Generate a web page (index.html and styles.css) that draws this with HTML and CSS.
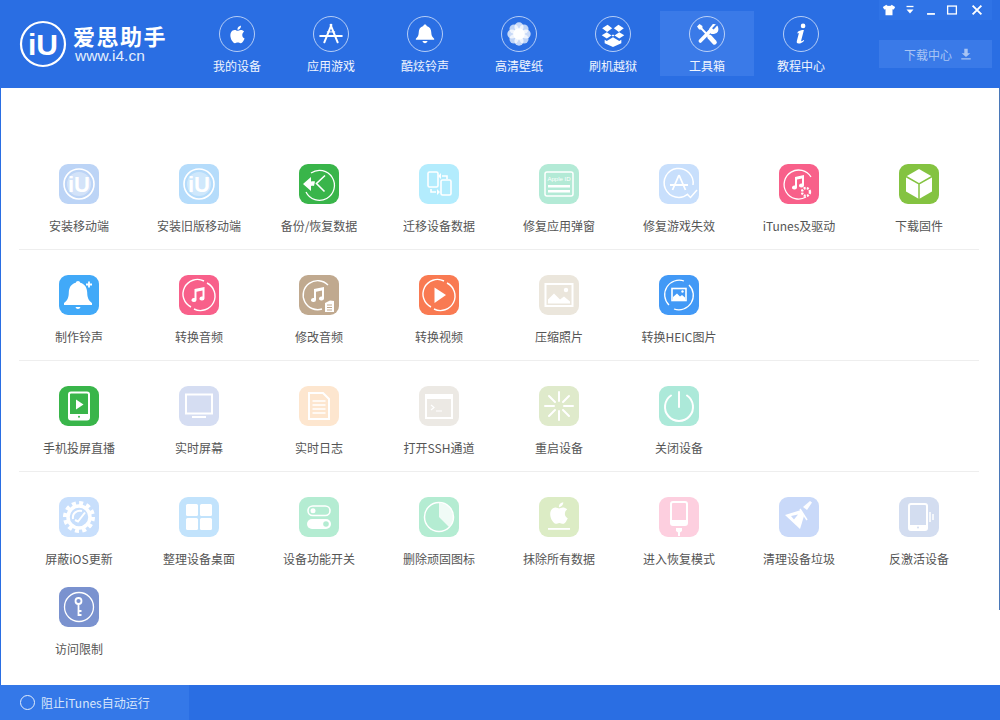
FILE: index.html
```html
<!DOCTYPE html>
<html lang="zh-CN">
<head>
<meta charset="utf-8">
<title>爱思助手</title>
<link rel="stylesheet" href="styles.css">
</head>
<body>
<svg class="defs" width="0" height="0" aria-hidden="true">
<defs>
<symbol id="apple" viewBox="0 0 24 24"><path fill="#fff" d="M18.71 19.5c-.83 1.24-1.71 2.45-3.05 2.47-1.34.03-1.77-.79-3.29-.79-1.53 0-2 .77-3.27.82-1.31.05-2.3-1.32-3.14-2.53C4.25 17 2.94 12.45 4.7 9.39c.87-1.52 2.43-2.48 4.12-2.51 1.28-.02 2.5.87 3.29.87.78 0 2.26-1.07 3.81-.91.65.03 2.47.26 3.64 1.98-.09.06-2.17 1.28-2.15 3.81.03 3.02 2.65 4.03 2.68 4.04-.03.07-.42 1.44-1.38 2.83M13 3.5c.73-.83 1.94-1.46 2.94-1.5.13 1.17-.34 2.35-1.04 3.19-.69.85-1.83 1.51-2.95 1.42-.15-1.15.41-2.35 1.05-3.11z"/></symbol>
<symbol id="n-app" viewBox="0 0 36 36"><g fill="none" stroke="#fff" stroke-linecap="round"><path stroke-width="2.400" d="M18.500 7 10 28M17.500 7 26 28"/><path stroke-width="2.400" d="M5 20.500h26"/><path stroke-width="1.200" d="M13.500 15.500h9"/></g></symbol>
<symbol id="n-bell" viewBox="0 0 36 36"><path fill="#fff" d="M18 6.500c1.200 0 2 .8 2 1.800 3.800 1 5.400 4 5.500 7.700.1 3.400 1 5.700 3.500 7.700v1.300H7v-1.300c2.500-2 3.400-4.300 3.500-7.700.1-3.700 1.700-6.700 5.500-7.700 0-1 .8-1.800 2-1.800zM15 26.500h6c-.3 1.600-1.500 2.500-3 2.500s-2.700-.9-3-2.500z"/></symbol>
<symbol id="n-flower" viewBox="0 0 36 36"><g fill="#fff"><circle cx="18" cy="9.500" r="5.500" opacity=".75"/><circle cx="18" cy="26.500" r="5.500" opacity=".75"/><circle cx="9.500" cy="18" r="5.500" opacity=".75"/><circle cx="26.500" cy="18" r="5.500" opacity=".75"/><circle cx="12" cy="12" r="5.500" opacity=".7"/><circle cx="24" cy="12" r="5.500" opacity=".7"/><circle cx="12" cy="24" r="5.500" opacity=".7"/><circle cx="24" cy="24" r="5.500" opacity=".7"/><circle cx="18" cy="18" r="7"/></g></symbol>
<symbol id="n-box" viewBox="0 0 36 36"><g fill="#fff"><path d="M11.500 7 17 11 11 15.500 5 11zM24.500 7 31 11l-6 4.500L19 11zM4.500 19.500l6-3.500L18 21l7.500-5 6 3.500-6 4-7.500-5-7.500 5z"/><path d="M8 25l2.500 1.500 7.500-4.500 7.500 4.500L28 25v4l-10 4.500L8 29z"/></g></symbol>
<symbol id="n-tools" viewBox="0 0 36 36"><g fill="none" stroke="#fff" stroke-linecap="round"><path stroke-width="2.400" d="M10 10l9 9.500"/><path stroke-width="5.500" d="M21 21.500l6 6.500"/><path stroke-width="4.200" d="M24 12 10 26.500"/></g><path fill="#fff" d="M6 9l3-3 3.500 2.500v3l-1 1h-3zM25 6a6 6 0 1 1-5 8l1-3z"/><path fill="#3a7ae8" d="M24 11l5-5 2 1-5 5.500z"/></symbol>
<symbol id="n-info" viewBox="0 0 36 36"><path fill="#fff" d="M20.500 5.500a2.800 2.800 0 1 1 0 5.600 2.800 2.800 0 0 1 0-5.600zM14 15.500c2-1.500 4.500-2.300 7.500-2.300l-3.300 12.500c-.2 1 .6 1.200 1.300.7l1.700-1.200.6.900c-2 2.200-4.200 3.400-6.600 3.400-2 0-2.700-1-2.200-3l2.500-9.700-1.800.6z"/></symbol>

<symbol id="i-iu" viewBox="0 0 40 40"><circle cx="20" cy="20" r="15" fill="none" stroke="#fff" stroke-width="1.600"/><circle cx="20" cy="20" r="12" fill="#fff" fill-opacity=".35"/><text x="20" y="28" text-anchor="middle" class="svg-logo">iU</text></symbol>
<symbol id="i-backup" viewBox="0 0 40 40"><g fill="none" stroke="#fff" stroke-width="1.300"><path d="M12 9a15 15 0 1 1-5 19"/><path stroke-width="1.600" d="M26 11.500l-8.500 8 8 8"/></g><path fill="#fff" d="M4 20l8-7v4.500c1.500-.5 3-.5 4 0l-1 4.500c-1-.5-2-.5-3 0V27z"/></symbol>
<symbol id="i-migrate" viewBox="0 0 40 40"><g fill="none" stroke="#fff" stroke-width="1.600"><rect x="9" y="8" width="10" height="15" rx="1.500"/><rect x="22" y="16" width="10" height="15" rx="1.500"/><path d="M23 12h5v3M17 28h-5v-3"/></g><path fill="#fff" d="M22 9v6l-3-3zM18 25v6l3-3z"/></symbol>
<symbol id="i-appleid" viewBox="0 0 40 40"><rect x="6" y="8" width="28" height="24" rx="2" fill="none" stroke="#fff" stroke-width="1.500"/><text x="20" y="17" text-anchor="middle" class="svg-tiny">Apple ID</text><rect x="9" y="21" width="22" height="2.500" fill="#fff"/><rect x="9" y="26" width="22" height="2.500" fill="#fff"/></symbol>
<symbol id="i-appfix" viewBox="0 0 40 40"><g fill="none" stroke="#fff" stroke-width="1.500"><path d="M29 30a14.500 14.500 0 1 1 5-9"/><path d="M28 30l3.500 3.500L38 26"/><path stroke-width="1.800" d="M20 11l-6.500 15M20 11l6.500 15M11 21h18"/></g></symbol>
<symbol id="i-itunes" viewBox="0 0 40 40"><g fill="none" stroke="#fff" stroke-width="1.300"><path d="M32 13a14.500 14.500 0 1 0-5 20"/><circle cx="27" cy="28" r="4" stroke-width="2.400" stroke-dasharray="2 1.200"/></g><path fill="#fff" d="M16 13l9-2v10.500a2.500 2 0 1 1-2-2V14.500l-5 1.100v8a2.500 2 0 1 1-2-2z"/></symbol>
<symbol id="i-cube" viewBox="0 0 40 40"><path fill="#fff" d="M20 5 33 12.500v15L20 35 7 27.500v-15z"/><path fill="none" stroke="#84c341" stroke-width="1.500" d="M7 12.500 20 20l13-7.500M20 20v15"/></symbol>
<symbol id="i-bell" viewBox="0 0 40 40"><path fill="#fff" d="M19 6c1.200 0 2 .7 2.200 1.800 5 1.300 6.800 5 7 9.700.1 5 1.300 8 4.800 10.500v2H5v-2c3.500-2.500 4.700-5.500 4.800-10.500.2-4.700 2-8.400 7-9.700C17 6.700 17.800 6 19 6zM16.500 32h5c-.3 1.300-1.300 2-2.500 2s-2.200-.7-2.500-2z"/><path fill="none" stroke="#fff" stroke-width="1.800" d="M30 6.500v6M27 9.500h6"/></symbol>
<symbol id="i-music" viewBox="0 0 40 40"><g fill="none" stroke="#fff" stroke-width="1.400"><path d="M25 6a14.500 14.500 0 0 0-13 26"/><path d="M15 34a14.500 14.500 0 0 0 13-26"/></g><path fill="#fff" d="M15.500 14l10-2v11.500a2.500 2 0 1 1-2-2V15.500l-6 1.200V25a2.500 2 0 1 1-2-2z"/></symbol>
<symbol id="i-musicedit" viewBox="0 0 40 40"><g fill="none" stroke="#fff" stroke-width="1.400"><path d="M29 10a14.500 14.500 0 1 0-6 24"/></g><path fill="#fff" d="M15 14l10-2v11.500a2.500 2 0 1 1-2-2V15.500l-6 1.200V25a2.500 2 0 1 1-2-2zM26 28l5-2.500 4 .5v11h-9z"/><path stroke="#c0a98f" fill="none" d="M28 30h5M28 32.500h5M28 35h5"/></symbol>
<symbol id="i-video" viewBox="0 0 40 40"><g fill="none" stroke="#fff" stroke-width="1.400"><path d="M25 6a14.500 14.500 0 0 0-13 26"/><path d="M15 34a14.500 14.500 0 0 0 13-26"/></g><path fill="#fff" d="M15.500 12.500 27 20l-11.500 8z"/></symbol>
<symbol id="i-photo" viewBox="0 0 40 40"><rect x="6.500" y="9" width="27" height="22" fill="none" stroke="#fff" stroke-width="2"/><path fill="#fff" d="M9 28.500v-4l6-6 6 6 4-3 6 5v2z"/><circle cx="27" cy="15" r="2.200" fill="#fff"/></symbol>
<symbol id="i-heic" viewBox="0 0 40 40"><g fill="none" stroke="#fff" stroke-width="1.300"><path d="M25 6a14.500 14.500 0 0 0-15 24"/><path d="M15 34a14.500 14.500 0 0 0 15-24"/><rect x="13" y="13.500" width="14" height="12" stroke-width="1.600"/></g><path fill="#fff" d="M14 25v-3l4-3.500 3 3 2-1.500 3 2.500V25z"/><circle cx="23.500" cy="16.500" r="1.200" fill="#fff"/></symbol>
<symbol id="i-cast" viewBox="0 0 40 40"><rect x="10" y="6.500" width="20" height="27" rx="2" fill="none" stroke="#fff" stroke-width="2"/><rect x="10" y="28" width="20" height="5.500" fill="#fff"/><circle cx="20" cy="30.800" r="1" fill="#39b54a"/><path fill="#fff" d="M17 13.500 24.500 18.500 17 23.500z"/></symbol>
<symbol id="i-screen" viewBox="0 0 40 40"><rect x="7" y="8.500" width="26" height="19" fill="none" stroke="#fff" stroke-width="2"/><path fill="#fff" d="M13 30h14v2H13z"/></symbol>
<symbol id="i-log" viewBox="0 0 40 40"><path fill="none" stroke="#fff" stroke-width="2" d="M10 7h14l6 6v20H10z"/><path fill="none" stroke="#fff" stroke-width="1.500" d="M13.500 15h13M13.500 19h13M13.500 23h13M13.500 27h13"/></symbol>
<symbol id="i-ssh" viewBox="0 0 40 40"><path fill="#fff" d="M6 8h28v5H6z"/><rect x="7" y="9" width="26" height="23" fill="none" stroke="#fff" stroke-width="2"/><path fill="none" stroke="#fff" stroke-width="1.200" d="M12 19l3 2.500-3 2.500M17 25h6"/></symbol>
<symbol id="i-restart" viewBox="0 0 40 40"><g stroke="#fff" stroke-width="2" stroke-linecap="round"><path d="M20 6v9M20 25v9M6 20h9M25 20h9M10 10l6 6M24 24l6 6M30 10l-6 6M16 24l-6 6"/></g></symbol>
<symbol id="i-power" viewBox="0 0 40 40"><g fill="none" stroke="#fff" stroke-width="2" stroke-linecap="round"><path d="M12 9.500a14 14 0 1 0 16 0"/><path d="M20 6v15"/></g></symbol>
<symbol id="i-gear" viewBox="0 0 40 40"><circle cx="20" cy="20" r="11" fill="none" stroke="#fff" stroke-width="3.500"/><circle cx="20" cy="20" r="14" fill="none" stroke="#fff" stroke-width="4" stroke-dasharray="4 3.300"/><path fill="none" stroke="#fff" stroke-width="2" d="M16 23l3 1.500 7-9M14 22c-1-6 4-9 9-8"/></symbol>
<symbol id="i-grid" viewBox="0 0 40 40"><g fill="#fff"><rect x="7" y="7" width="12" height="12" rx="1.500"/><rect x="21" y="7" width="12" height="12" rx="1.500"/><rect x="7" y="21" width="12" height="12" rx="1.500"/><rect x="21" y="21" width="12" height="12" rx="1.500"/></g></symbol>
<symbol id="i-toggle" viewBox="0 0 40 40"><rect x="9" y="9" width="22" height="9.500" rx="4.750" fill="none" stroke="#fff" stroke-width="1.600"/><circle cx="14" cy="13.700" r="2.500" fill="#fff"/><rect x="8" y="22" width="24" height="10" rx="5" fill="#fff"/><circle cx="27" cy="27" r="2.800" fill="#b4ecd2"/></symbol>
<symbol id="i-pie" viewBox="0 0 40 40"><circle cx="20" cy="20" r="14.500" fill="none" stroke="#fff" stroke-width="1.500"/><path fill="#fff" fill-opacity=".8" d="M20 6a14 14 0 0 1 10 24L20 20z"/></symbol>
<symbol id="i-wipe" viewBox="0 0 40 40"><use href="#apple" x="7" y="3" width="26" height="26"/><rect x="9" y="31" width="22" height="1.800" fill="#fff"/></symbol>
<symbol id="i-recovery" viewBox="0 0 40 40"><rect x="12" y="5" width="16" height="23" rx="2" fill="none" stroke="#fff" stroke-width="2"/><path fill="#fff" d="M12 23h16v5H12z"/><path fill="#fff" d="M17 31h6v3l-2 1.500V39h-2v-3.500L17 34z"/></symbol>
<symbol id="i-broom" viewBox="0 0 40 40"><path fill="#fff" d="M6 18 22 13l3 6-4 13z"/><path fill="#fdfdff" d="M24 10l7-6 2 1.500-5 7.500z"/><path fill="none" stroke="#fff" stroke-width="1.500" d="M21 12l7 11"/><path fill="#c9d9f9" d="M12 19l7-1.500-4 5z"/></symbol>
<symbol id="i-vibrate" viewBox="0 0 40 40"><rect x="10" y="7" width="18" height="26" rx="2" fill="none" stroke="#fff" stroke-width="2"/><path fill="#fff" d="M10 28h18v5H10z"/><circle cx="19" cy="30.500" r="1" fill="#d3ddf0"/><path fill="none" stroke="#fff" stroke-width="1.500" d="M31 15v10M34 17v6"/></symbol>
<symbol id="i-key" viewBox="0 0 40 40"><circle cx="20" cy="20" r="14.500" fill="none" stroke="#fff" stroke-width="1.300"/><circle cx="19.500" cy="14" r="3" fill="none" stroke="#fff" stroke-width="1.800"/><path fill="none" stroke="#fff" stroke-width="1.800" d="M19.500 17v12M19.500 24h3M19.500 28h3"/></symbol>
</defs>
</svg>

<header class="topbar">
  <div class="brand">
    <svg class="brand-mark" viewBox="0 0 48 48" width="48" height="48"><circle cx="24" cy="24" r="22" fill="#2a6ee3" stroke="#fff" stroke-width="2.200"/><text x="24" y="35" text-anchor="middle" class="svg-brand">iU</text></svg>
    <div class="brand-text">
      <div class="brand-name">爱思助手</div>
      <div class="brand-url">www.i4.cn</div>
    </div>
  </div>
  <nav class="nav">
    <div class="nav-item"><span class="nav-circle"><svg class="ni-apple"><use href="#apple"/></svg></span><span class="nav-label">我的设备</span></div>
    <div class="nav-item"><span class="nav-circle"><svg class="ni"><use href="#n-app"/></svg></span><span class="nav-label">应用游戏</span></div>
    <div class="nav-item"><span class="nav-circle"><svg class="ni"><use href="#n-bell"/></svg></span><span class="nav-label">酷炫铃声</span></div>
    <div class="nav-item"><span class="nav-circle"><svg class="ni"><use href="#n-flower"/></svg></span><span class="nav-label">高清壁纸</span></div>
    <div class="nav-item"><span class="nav-circle"><svg class="ni"><use href="#n-box"/></svg></span><span class="nav-label">刷机越狱</span></div>
    <div class="nav-item active"><span class="nav-circle"><svg class="ni"><use href="#n-tools"/></svg></span><span class="nav-label">工具箱</span></div>
    <div class="nav-item"><span class="nav-circle"><svg class="ni"><use href="#n-info"/></svg></span><span class="nav-label">教程中心</span></div>
  </nav>
  <div class="side">
    <div class="winctl">
      <svg class="wi" viewBox="0 0 16 16"><path fill="#fff" d="M5 2 1 4.500l1.500 3L4 7v7h8V7l1.500.5 1.500-3L11 2c-.5 1.800-5.500 1.800-6 0z"/></svg>
      <svg class="wi" viewBox="0 0 16 16"><path fill="none" stroke="#fff" stroke-width="1.500" d="M4 4h8"/><path fill="#fff" d="M4 7.500h8L8 12z"/></svg>
      <svg class="wi" viewBox="0 0 16 16"><path fill="none" stroke="#fff" stroke-width="2" d="M3.500 12.500h9"/></svg>
      <svg class="wi" viewBox="0 0 16 16"><rect x="3" y="3.500" width="10" height="9" fill="none" stroke="#fff" stroke-width="1.500"/></svg>
      <svg class="wi wi-close" viewBox="0 0 16 16"><path fill="none" stroke="#fff" stroke-width="2.200" d="M3 3l10 10M13 3 3 13"/></svg>
    </div>
    <div class="download">
      <span>下载中心</span>
      <svg class="dl-ico" viewBox="0 0 14 14"><path fill="#a9c5f4" d="M5 1h4v5h3L7 10.500 2 6h3zM1.500 12h11v1.500h-11z"/></svg>
    </div>
  </div>
</header>

<main class="tools">
  <section class="tool-row">
    <div class="tool"><svg class="ico c-a1"><use href="#i-iu"/></svg><span>安装移动端</span></div>
    <div class="tool"><svg class="ico c-a2"><use href="#i-iu"/></svg><span>安装旧版移动端</span></div>
    <div class="tool"><svg class="ico c-a3"><use href="#i-backup"/></svg><span>备份/恢复数据</span></div>
    <div class="tool"><svg class="ico c-a4"><use href="#i-migrate"/></svg><span>迁移设备数据</span></div>
    <div class="tool"><svg class="ico c-a5"><use href="#i-appleid"/></svg><span>修复应用弹窗</span></div>
    <div class="tool"><svg class="ico c-a6"><use href="#i-appfix"/></svg><span>修复游戏失效</span></div>
    <div class="tool"><svg class="ico c-a7"><use href="#i-itunes"/></svg><span>iTunes及驱动</span></div>
    <div class="tool"><svg class="ico c-a8"><use href="#i-cube"/></svg><span>下载固件</span></div>
  </section>
  <section class="tool-row">
    <div class="tool"><svg class="ico c-b1"><use href="#i-bell"/></svg><span>制作铃声</span></div>
    <div class="tool"><svg class="ico c-a7"><use href="#i-music"/></svg><span>转换音频</span></div>
    <div class="tool"><svg class="ico c-b3"><use href="#i-musicedit"/></svg><span>修改音频</span></div>
    <div class="tool"><svg class="ico c-b4"><use href="#i-video"/></svg><span>转换视频</span></div>
    <div class="tool"><svg class="ico c-b5"><use href="#i-photo"/></svg><span>压缩照片</span></div>
    <div class="tool"><svg class="ico c-b6"><use href="#i-heic"/></svg><span>转换HEIC图片</span></div>
  </section>
  <section class="tool-row">
    <div class="tool"><svg class="ico c-a3"><use href="#i-cast"/></svg><span>手机投屏直播</span></div>
    <div class="tool"><svg class="ico c-c2"><use href="#i-screen"/></svg><span>实时屏幕</span></div>
    <div class="tool"><svg class="ico c-c3"><use href="#i-log"/></svg><span>实时日志</span></div>
    <div class="tool"><svg class="ico c-c4"><use href="#i-ssh"/></svg><span>打开SSH通道</span></div>
    <div class="tool"><svg class="ico c-c5"><use href="#i-restart"/></svg><span>重启设备</span></div>
    <div class="tool"><svg class="ico c-c6"><use href="#i-power"/></svg><span>关闭设备</span></div>
  </section>
  <section class="tool-row last">
    <div class="tool"><svg class="ico c-a6"><use href="#i-gear"/></svg><span>屏蔽iOS更新</span></div>
    <div class="tool"><svg class="ico c-d2"><use href="#i-grid"/></svg><span>整理设备桌面</span></div>
    <div class="tool"><svg class="ico c-d3"><use href="#i-toggle"/></svg><span>设备功能开关</span></div>
    <div class="tool"><svg class="ico c-d3"><use href="#i-pie"/></svg><span>删除顽固图标</span></div>
    <div class="tool"><svg class="ico c-d5"><use href="#i-wipe"/></svg><span>抹除所有数据</span></div>
    <div class="tool"><svg class="ico c-d6"><use href="#i-recovery"/></svg><span>进入恢复模式</span></div>
    <div class="tool"><svg class="ico c-d7"><use href="#i-broom"/></svg><span>清理设备垃圾</span></div>
    <div class="tool"><svg class="ico c-d8"><use href="#i-vibrate"/></svg><span>反激活设备</span></div>
    <div class="tool"><svg class="ico c-d9"><use href="#i-key"/></svg><span>访问限制</span></div>
  </section>
</main>

<footer class="footer">
  <div class="itunes-block"><span class="ring"></span><span>阻止iTunes自动运行</span></div>
</footer>
</body>
</html>
```
FILE: styles.css
```css
* { box-sizing: border-box; }
html, body { margin: 0; height: 100%; }
body {
  width: 1000px;
  height: 720px;
  overflow: hidden;
  display: flex;
  flex-direction: column;
  background: #fff;
  font-family: "Noto Sans CJK SC", "Liberation Sans", sans-serif;
  font-size: 12px;
  color: #555;
}
.defs { position: absolute; }

.topbar {
  height: 88px;
  flex: none;
  background: #2a6ee3;
  display: flex;
  align-items: flex-start;
  color: #fff;
}
.brand {
  width: 190px;
  flex: none;
  display: flex;
  align-items: flex-start;
  padding: 20px 0 0 19px;
  gap: 6px;
}
.brand-text { display: flex; flex-direction: column; padding-top: 3px; }
.brand-name {
  font-size: 22px;
  letter-spacing: 1.500px;
  font-weight: 700;
  line-height: 25px;
  white-space: nowrap;
}
.brand-url {
  font-family: "Liberation Sans", sans-serif;
  font-size: 15.500px;
  line-height: 15px;
  margin-left: 2px;
  color: #e4eefc;
}
.svg-brand {
  font-family: "Liberation Sans", sans-serif;
  font-size: 30px;
  font-weight: 700;
  fill: #fff;
}
.svg-logo {
  font-family: "Liberation Sans", sans-serif;
  font-size: 22px;
  font-weight: 700;
  fill: #fff;
}
.svg-tiny {
  font-family: "Liberation Sans", sans-serif;
  font-size: 6px;
  fill: #fff;
}

.nav { display: flex; padding-top: 11px; }
.nav-item {
  width: 94px;
  height: 65px;
  display: flex;
  flex-direction: column;
  align-items: center;
  padding-top: 5px;
}
.nav-item.active { background: #3a7ae8; }
.nav-circle {
  width: 36px;
  height: 36px;
  border-radius: 50%;
  border: 1px solid rgba(255, 255, 255, .65);
  display: flex;
  align-items: center;
  justify-content: center;
}
.ni { width: 30px; height: 30px; }
.ni-apple { width: 21px; height: 21px; }
.nav-label {
  margin-top: 6px;
  line-height: 16px;
  color: #f0f5fe;
  white-space: nowrap;
}

.side {
  margin-left: auto;
  margin-right: 8px;
  width: 113px;
  display: flex;
  flex-direction: column;
  gap: 20px;
}
.winctl {
  height: 20px;
  background: #2f73e6;
  display: flex;
  align-items: center;
  padding-left: 3px;
  gap: 7px;
}
.wi { width: 14px; height: 14px; }
.wi-close { margin-left: 4px; }
.download {
  height: 28px;
  background: #3a7ae8;
  color: #a9c5f4;
  display: flex;
  align-items: center;
  justify-content: center;
  padding-left: 5px;
  gap: 8px;
}
.dl-ico { width: 12px; height: 12px; }

.tools {
  flex: 1;
  border-left: 1px solid #2a6ee3;
  padding: 51px 21px 0 18px;
  background: linear-gradient(#4a78b8, #4a78b8) right top / 1px 522px no-repeat;
}
.tool-row {
  display: grid;
  grid-template-columns: repeat(8, 120px);
  row-gap: 20px;
  padding: 25px 0 15px;
  border-bottom: 1px solid #eeeeee;
}
.tool-row.last { border-bottom: none; }
.tool {
  display: flex;
  flex-direction: column;
  align-items: center;
  gap: 14px;
}
.tool span { line-height: 16px; white-space: nowrap; }
.ico { width: 40px; height: 40px; border-radius: 9px; display: block; }

.c-a1 { background: #bcd4f6; }
.c-a2 { background: #b5dcfb; }
.c-a3 { background: #39b54a; }
.c-a4 { background: #b3ecfd; }
.c-a5 { background: #b3ead6; }
.c-a6 { background: #c8dffc; }
.c-a7 { background: #f8608a; }
.c-a8 { background: #84c341; }
.c-b1 { background: #41a9f8; }
.c-b3 { background: #c0a98f; }
.c-b4 { background: #f97a52; }
.c-b5 { background: #ebe6dc; }
.c-b6 { background: #4299f6; }
.c-c2 { background: #d5ddf2; }
.c-c3 { background: #fde6cf; }
.c-c4 { background: #ece9e4; }
.c-c5 { background: #dfeacb; }
.c-c6 { background: #ace9d9; }
.c-d2 { background: #c2e3fc; }
.c-d3 { background: #b4ecd2; }
.c-d5 { background: #dcecc5; }
.c-d6 { background: #fdcfdf; }
.c-d7 { background: #c9d9f9; }
.c-d8 { background: #d3ddf0; }
.c-d9 { background: #7a92cf; }

.footer {
  height: 35px;
  flex: none;
  background: #2a6ee3;
  display: flex;
}
.itunes-block {
  width: 189px;
  background: #3478e8;
  color: #d8e6fb;
  display: flex;
  align-items: center;
  padding-left: 20px;
  gap: 6px;
}
.ring {
  width: 15px;
  height: 15px;
  border-radius: 50%;
  border: 1.500px solid #e4eefc;
}
```
